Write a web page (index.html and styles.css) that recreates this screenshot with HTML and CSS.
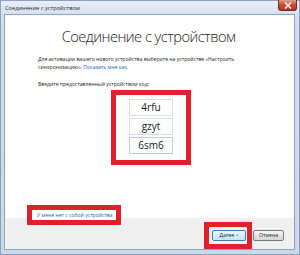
FILE: index.html
```html
<!DOCTYPE html>
<html lang="ru">
<head>
    <meta charset="UTF-8">
    <title>Соединение с устройством</title>
    <link rel="stylesheet" href="styles.css">
</head>
<body>

    <!-- окно мастера -->
    <div class="window">
        <div class="titlebar">
            <span class="title">Соединение с устройством</span>
            <span class="close">
                <svg width="8" height="7" viewBox="0 0 8 7">
                    <path d="M1 0.5 L7 6.5 M7 0.5 L1 6.5" stroke="#fff" stroke-width="1.6"/>
                </svg>
            </span>
        </div>

        <div class="client">
            <div class="content">
                <h1>Соединение с устройством</h1>
                <p class="intro">Для активации вашего нового устройства выберите на устройстве «Настроить синхронизацию». <a href="#">Показать мне как.</a></p>
                <p class="prompt">Введите предоставленный устройством код:</p>

                <div class="code-box">
                    <div class="code">4rfu</div>
                    <div class="code">gzyt</div>
                    <div class="code">6sm6</div>
                </div>

                <div class="no-device">
                    <a href="#">У меня нет с собой устройства</a>
                </div>
            </div>

            <!-- кнопки внизу -->
            <div class="footer">
                <div class="next-wrap">
                    <button class="btn btn-default">Далее &gt;</button>
                </div>
                <button class="btn btn-cancel">Отмена</button>
            </div>
        </div>
    </div>

</body>
</html>
```

FILE: styles.css
```css
* {
    margin: 0;
    padding: 0;
    box-sizing: border-box;
}

body {
    width: 300px;
    height: 255px;
    overflow: hidden;
    font-family: 'Open Sans', 'Liberation Sans', sans-serif;
    background: #fff;
}

/* рамка окна */
.window {
    width: 300px;
    height: 255px;
    display: flex;
    flex-direction: column;
    background: linear-gradient(#e6eef8, #d0ddec 20px, #c9d8ea);
    border: 1px solid #8aa2bd;
    padding: 0 4px 4px 3px;
}

.titlebar {
    height: 13px;
    flex-shrink: 0;
    display: flex;
    align-items: flex-start;
    justify-content: space-between;
}

.title {
    font-size: 5.7px;
    line-height: 8px;
    color: #1e2a38;
    padding-top: 3px;
    padding-left: 1px;
}

.close {
    width: 19px;
    height: 11px;
    margin-top: -1px;
    margin-right: -2px;
    display: flex;
    align-items: center;
    justify-content: center;
    background: linear-gradient(#e4a090, #c8503c 45%, #b83220);
    border: 1px solid #7a2a20;
    border-top: none;
    border-radius: 0 0 3px 3px;
}

.client {
    flex: 1;
    min-height: 0;
    display: flex;
    flex-direction: column;
    background: #f0f0f0;
    border: 1px solid #8ea4bd;
}

.content {
    height: 203px;
    flex-shrink: 0;
    background: #fff;
    padding-top: 12px;
    display: flex;
    flex-direction: column;
}

h1 {
    font-size: 14.6px;
    font-weight: 300;
    line-height: 18px;
    letter-spacing: -0.5px;
    color: #1a1a1a;
    text-align: center;
    padding-right: 2px;
}

.intro {
    margin: 11px 0 0 33px;
    width: 200px;
    font-size: 5.1px;
    line-height: 7.5px;
    color: #222;
}

.intro a,
.no-device a {
    color: #1a62b8;
    text-decoration: none;
}

.prompt {
    margin: 9.5px 0 0 33px;
    font-size: 5.1px;
    line-height: 7.5px;
    color: #222;
}

/* выделение кода */
.code-box {
    align-self: center;
    width: 80px;
    margin: 2px 0 0 3px;
    border: 5px solid #e0202a;
    padding: 4px 13px 6px;
    display: flex;
    flex-direction: column;
    gap: 2px;
}

.code {
    height: 17px;
    border: 1px solid #d9dde3;
    font-size: 10px;
    line-height: 15px;
    color: #1a1a1a;
    text-align: center;
}

.code:last-child {
    border-color: #b9cde3;
}

.no-device {
    width: 94px;
    height: 20px;
    margin: 40px 0 -5px 22px;
    position: relative;
    border: 5px solid #e0202a;
    background: #fff;
    padding-left: 5px;
    font-size: 5.1px;
    line-height: 10px;
    white-space: nowrap;
}

.footer {
    flex: 1;
    display: flex;
    align-items: flex-start;
    justify-content: flex-end;
    padding: 4px 10px 0 0;
}

.next-wrap {
    border: 5px solid #e0202a;
    padding: 3px 1px 3px 3px;
}

.btn {
    display: block;
    width: 34px;
    height: 11px;
    font-family: 'Open Sans', 'Liberation Sans', sans-serif;
    font-size: 5.1px;
    line-height: 9px;
    color: #1a1a1a;
    background: linear-gradient(#f6f6f6, #e6e6e6 50%, #d5d5d5);
    border: 1px solid #7a7a7a;
    border-radius: 2px;
}

.btn-default {
    border-color: #3c7fb1;
    background: linear-gradient(#eaf6fd, #d9f0fc 50%, #bee6fd);
}

.btn-cancel {
    width: 31px;
    margin: 8px 0 0 1px;
}
```
